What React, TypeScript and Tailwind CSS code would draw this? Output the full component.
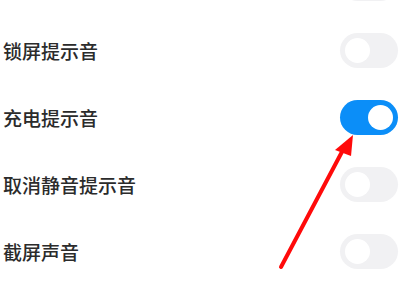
import React from "react";

function Toggle({ on }: { on?: boolean }) {
  return on ? (
    <div className="w-[58px] h-[35px] rounded-full bg-[#0b8ef8] flex items-center justify-end pr-[5px]">
      <div className="w-[25px] h-[25px] rounded-full bg-white" />
    </div>
  ) : (
    <div className="w-[58px] h-[35px] rounded-full bg-[#f1f1f3] flex items-center pl-[5px]">
      <div className="w-[25px] h-[25px] rounded-full bg-white" />
    </div>
  );
}

function Row({ label, on }: { label: string; on?: boolean }) {
  return (
    <div className="h-[67px] flex items-center justify-between pl-[3px] pr-[2px]">
      <span className="text-[19px] leading-none text-[#2b2b2b] font-medium">{label}</span>
      <Toggle on={on} />
    </div>
  );
}

export default function App() {
  return (
    <div
      className="relative w-[400px] h-[300px] overflow-hidden bg-white"
      style={{ fontFamily: '"Noto Sans CJK SC", "Noto Sans", sans-serif' }}
    >
      <div className="flex flex-col mt-[-50px]">
        <Row label="" />
        <Row label="锁屏提示音" />
        <Row label="充电提示音" on />
        <Row label="取消静音提示音" />
        <Row label="截屏声音" />
      </div>
      <svg className="absolute left-0 top-0" width="400" height="300" viewBox="0 0 400 300">
        <line x1="281" y1="267" x2="344" y2="148" stroke="#ff0a0a" strokeWidth="4" strokeLinecap="round" />
        <polygon points="353,135 335,150 351,156" fill="#ff0a0a" />
      </svg>
    </div>
  );
}
